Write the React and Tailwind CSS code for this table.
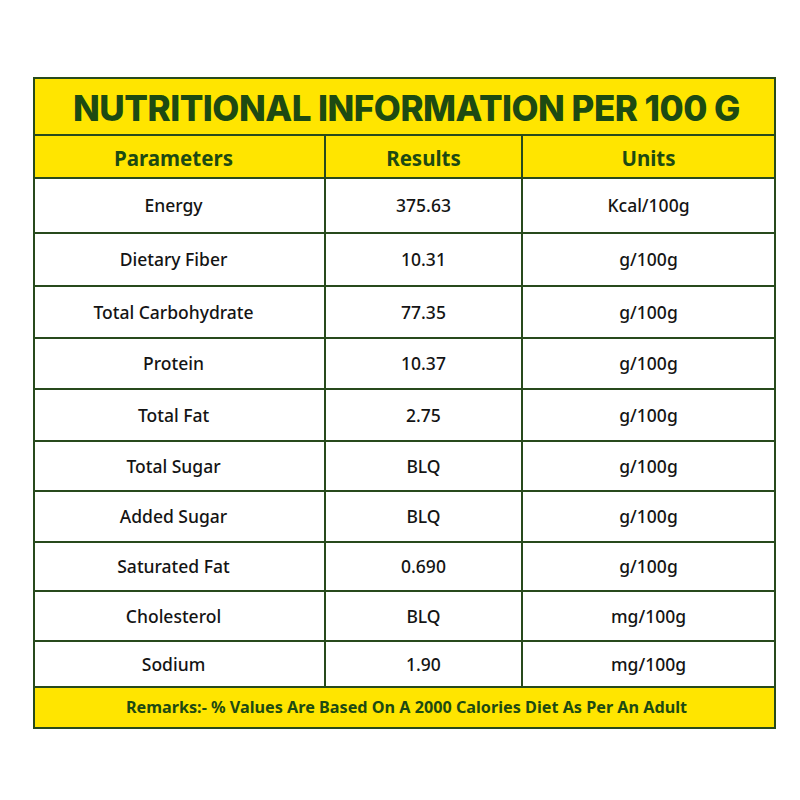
const rows = [
  ['Energy', '375.63', 'Kcal/100g', 'h-[55px]'],
  ['Dietary Fiber', '10.31', 'g/100g', 'h-[53px]'],
  ['Total Carbohydrate', '77.35', 'g/100g', 'h-[52px]'],
  ['Protein', '10.37', 'g/100g', 'h-[51px]'],
  ['Total Fat', '2.75', 'g/100g', 'h-[52px]'],
  ['Total Sugar', 'BLQ', 'g/100g', 'h-[50px]'],
  ['Added Sugar', 'BLQ', 'g/100g', 'h-[51px]'],
  ['Saturated Fat', '0.690', 'g/100g', 'h-[49px]'],
  ['Cholesterol', 'BLQ', 'mg/100g', 'h-[50px]'],
  ['Sodium', '1.90', 'mg/100g', 'h-[46px]'],
];

export default function App() {
  return (
    <div className="w-[800px] h-[800px] bg-white pt-[77px] pl-[33px] font-['Noto_Sans',sans-serif]">
      <div className="w-[743px] border-2 border-[#284a1c]">
        <div className="h-[57px] bg-[#ffe500] flex items-center justify-center border-b-2 border-[#284a1c] pt-[3px] pl-[4px]">
          <h1 className="font-['Inter',sans-serif] font-extrabold text-[35px] tracking-[-0.5px] text-[#1d4a12] leading-none">
            NUTRITIONAL INFORMATION PER 100 G
          </h1>
        </div>
        <div className="grid grid-cols-[291px_197px_1fr] h-[43px] bg-[#ffe500] text-[#1d4a12] font-bold text-[20.5px] border-b-2 border-[#284a1c]">
          <div className="flex items-center justify-center border-r-2 border-[#284a1c] pr-3 pt-[4px]">Parameters</div>
          <div className="flex items-center justify-center border-r-2 border-[#284a1c] pt-[4px]">Results</div>
          <div className="flex items-center justify-center pt-[4px]">Units</div>
        </div>
        {rows.map(([name, value, unit, h]) => (
          <div key={name} className={`grid grid-cols-[291px_197px_1fr] ${h} text-[17.5px] font-medium text-[#141414] border-b-2 border-[#284a1c]`}>
            <div className="flex items-center justify-center border-r-2 border-[#284a1c] pr-3">{name}</div>
            <div className="flex items-center justify-center border-r-2 border-[#284a1c]">{value}</div>
            <div className="flex items-center justify-center">{unit}</div>
          </div>
        ))}
        <div className="h-[39px] bg-[#ffe500] flex items-center justify-center pl-[4px] text-[#1d4a12] font-bold text-[16.2px]">
          Remarks:- % Values Are Based On A 2000 Calories Diet As Per An Adult
        </div>
      </div>
    </div>
  );
}
